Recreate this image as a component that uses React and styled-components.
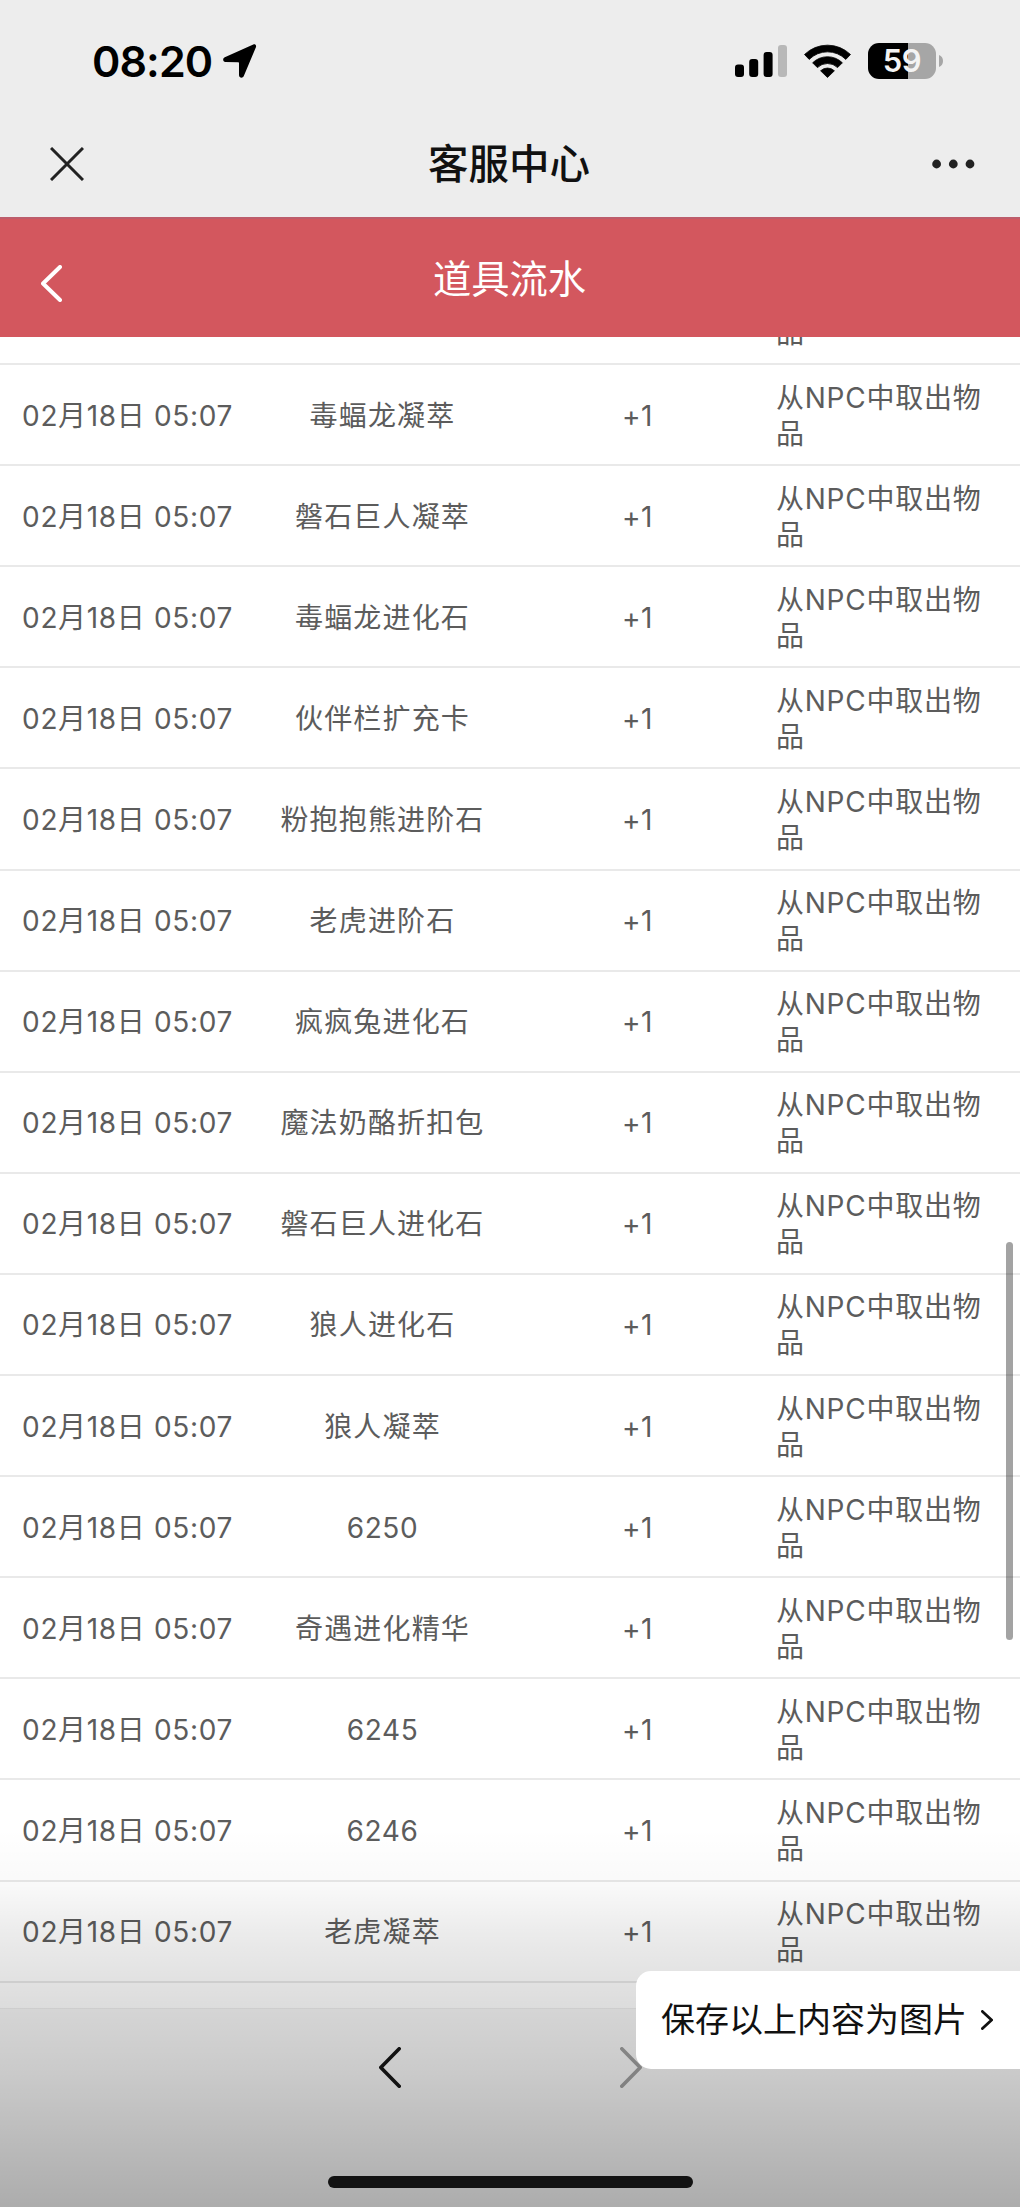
import React from "react";
import styled, { createGlobalStyle } from "styled-components";

const GlobalStyle = createGlobalStyle`
  * { box-sizing: border-box; }
  body {
    margin: 0;
    background: #fff;
    font-family: Inter, "Noto Sans CJK SC", sans-serif;
  }
`;

const Screen = styled.div`
  position: relative;
  display: flex;
  flex-direction: column;
  width: 1020px;
  height: 2207px;
  overflow: hidden;
  background: #fff;
`;

const StatusBar = styled.div`
  display: flex;
  justify-content: space-between;
  align-items: center;
  height: 122px;
  padding: 0 77px 0 92px;
  background: #ededed;
`;

const StatusGroup = styled.div`
  display: flex;
  align-items: center;
`;

const Clock = styled.span`
  width: 131px;
  font-size: 43px;
  font-weight: 600;
  line-height: 50px;
  letter-spacing: -0.9px;
  color: #000;
  white-space: nowrap;
`;

const Glyph = styled.svg`
  display: block;
  flex: none;
  margin-left: ${(p) => p.$left || 0}px;
`;

const Battery = styled.div`
  display: flex;
  align-items: center;
  justify-content: center;
  width: 68px;
  height: 36px;
  margin-left: 17px;
  border-radius: 11px;
  background: linear-gradient(90deg, #000 40px, #a6a6a6 40px);
  color: #f4f4f4;
  font-size: 31px;
  font-weight: 600;
  letter-spacing: -0.3px;
  line-height: 36px;
`;

const NavBar = styled.div`
  display: grid;
  grid-template-columns: 1fr auto 1fr;
  align-items: center;
  height: 95px;
  padding: 0 45px 11px 50px;
  background: #ededed;
`;

const NavTitle = styled.h1`
  margin: 2px 7px 0 0;
  font-size: 40.5px;
  font-weight: 500;
  line-height: 60px;
  color: #111;
`;

const NavEnd = styled.div`
  display: flex;
  justify-content: flex-end;
`;

const PageHeader = styled.div`
  display: grid;
  grid-template-columns: 1fr auto 1fr;
  align-items: center;
  height: 120px;
  padding: 10px 41px 0 41px;
  border-top: 2px solid #bd5d6b;
  background: #d3575e;
`;

const PageTitle = styled.h2`
  margin: 0 1px 9px 0;
  font-size: 38.3px;
  font-weight: 400;
  line-height: 56px;
  color: #fff;
`;

const List = styled.div`
  height: 1671px;
  overflow: hidden;
  background: #fff;
`;

const Rows = styled.div`
  margin-top: -73px;
`;

const Row = styled.div`
  display: grid;
  grid-template-columns: repeat(4, 255px);
  align-items: center;
  height: 101.1px;
  padding-top: 2px;
  border-bottom: 2px solid #e9e9e9;
  color: #5c5c5c;
  font-size: 28px;
  font-weight: 400;
  line-height: 36px;
`;

const Cell = styled.div`
  text-align: center;
  white-space: nowrap;
  letter-spacing: ${(p) => (p.$numeric ? "0.65px" : "1.15px")};
`;

const Reason = styled.div`
  padding: 0 20px 0 11px;
  white-space: nowrap;
`;

const Line = styled.span`
  display: block;
  min-height: 36px;
  letter-spacing: 0.75px;
`;

const BottomBar = styled.div`
  display: flex;
  flex: 1;
  flex-direction: column;
  justify-content: space-between;
  align-items: center;
  padding: 38px 0 19px;
  border-top: 1px solid #eee;
  background: #f7f7f7;
`;

const Pager = styled.div`
  display: flex;
  justify-content: space-between;
  width: 263px;
`;

const HomeIndicator = styled.div`
  width: 365px;
  height: 12px;
  border-radius: 6px;
  background: #1a1a1a;
`;

const Shade = styled.div`
  position: absolute;
  left: 0;
  right: 0;
  bottom: 0;
  height: 379px;
  background: linear-gradient(
    rgba(0, 0, 0, 0) 0%,
    rgba(0, 0, 0, 0.025) 15%,
    rgba(0, 0, 0, 0.08) 28%,
    rgba(0, 0, 0, 0.137) 47.5%,
    rgba(0, 0, 0, 0.18) 64%,
    rgba(0, 0, 0, 0.3) 100%
  );
  pointer-events: none;
`;

const Scrollbar = styled.div`
  position: absolute;
  top: 1242px;
  right: 7px;
  width: 7px;
  height: 398px;
  border-radius: 4px;
  background: rgba(0, 0, 0, 0.36);
`;

const SaveButton = styled.button`
  position: absolute;
  top: 1971px;
  right: 0;
  display: flex;
  justify-content: space-between;
  align-items: center;
  width: 384px;
  height: 98px;
  padding: 0 27px 0 25px;
  border: 0;
  border-radius: 15px 0 0 15px;
  background: #fff;
  color: #111;
  font-family: inherit;
  font-size: 34px;
  font-weight: 400;
  line-height: 50px;
  white-space: nowrap;
`;

const names = [
  "毒蝠龙凝萃",
  "磐石巨人凝萃",
  "毒蝠龙进化石",
  "伙伴栏扩充卡",
  "粉抱抱熊进阶石",
  "老虎进阶石",
  "疯疯兔进化石",
  "魔法奶酪折扣包",
  "磐石巨人进化石",
  "狼人进化石",
  "狼人凝萃",
  "6250",
  "奇遇进化精华",
  "6245",
  "6246",
  "老虎凝萃",
];

function Chevron({ width, height, stroke, color, flip }) {
  const h = stroke / 2;
  const a = flip ? h : width - h;
  const b = flip ? width - h : h;
  return (
    <Glyph width={width} height={height} viewBox={`0 0 ${width} ${height}`} fill="none">
      <path
        d={`M${a} ${h} L${b} ${height / 2} L${a} ${height - h}`}
        stroke={color}
        strokeWidth={stroke}
        strokeLinecap="round"
        strokeLinejoin="round"
      />
    </Glyph>
  );
}

export default function App() {
  return (
    <>
      <GlobalStyle />
      <Screen>
        <StatusBar>
          <StatusGroup>
            <Clock>08:20</Clock>
            <Glyph width="34" height="34" viewBox="0 0 34 34">
              <path
                d="M30.3 .5 L1.8 13.2 C-.7 14.4 -.2 18 2.4 18 L15.3 18.2 Q16 18.2 16 19 L16 31 C16 34 19.7 34.7 20.8 32 L32.8 3.6 C33.7 1.4 32.4 -.4 30.3 .5 Z"
                fill="#000"
              />
            </Glyph>
          </StatusGroup>
          <StatusGroup>
            <Glyph width="53" height="34" viewBox="0 0 53 34">
              <rect x="1" y="20.5" width="9" height="12.5" rx="3" />
              <rect x="15.2" y="15" width="9" height="18" rx="3" />
              <rect x="29.6" y="8" width="9" height="25" rx="3" />
              <rect x="44" y="1" width="9" height="32" rx="3" fill="#b8b8b8" />
            </Glyph>
            <Glyph $left={17} width="47" height="34" viewBox="0 0 47 34">
              <path d="M0.5 10.5 A33 33 0 0 1 46.5 10.5 L41.8 15.4 A26 26 0 0 0 5.2 15.4 Z" stroke="#000" strokeWidth="0.8" strokeLinejoin="round" />
              <path d="M8.6 18.8 A21.3 21.3 0 0 1 38.4 18.8 L33.6 23.6 A14.5 14.5 0 0 0 13.4 23.6 Z" stroke="#000" strokeWidth="0.8" strokeLinejoin="round" />
              <path d="M16.6 26.8 A10 10 0 0 1 30.4 26.8 L23.5 33.5 Z" stroke="#000" strokeWidth="0.8" strokeLinejoin="round" />
            </Glyph>
            <Battery>59</Battery>
            <Glyph $left={3} width="4" height="12" viewBox="0 0 4 12">
              <path d="M0 0 Q4 1.5 4 6 Q4 10.5 0 12 Z" fill="#a6a6a6" />
            </Glyph>
          </StatusGroup>
        </StatusBar>

        <NavBar>
          <Glyph width="34" height="34" viewBox="0 0 34 34" fill="none">
            <path d="M1 1 L33 33 M33 1 L1 33" stroke="#222" strokeWidth="3" />
          </Glyph>
          <NavTitle>客服中心</NavTitle>
          <NavEnd>
            <Glyph width="43" height="10" viewBox="0 0 43 10" fill="#222">
              <circle cx="4.6" cy="5" r="4.4" />
              <circle cx="21.3" cy="5" r="4.4" />
              <circle cx="38" cy="5" r="4.4" />
            </Glyph>
          </NavEnd>
        </NavBar>

        <PageHeader>
          <Chevron width={21} height={37} stroke={4} color="#fff" />
          <PageTitle>道具流水</PageTitle>
        </PageHeader>

        <List>
          <Rows>
            <Row>
              <Cell />
              <Cell />
              <Cell />
              <Reason>
                <Line />
                <Line>品</Line>
              </Reason>
            </Row>
            {names.map((name) => (
              <Row key={name}>
                <Cell $numeric>02月18日 05:07</Cell>
                <Cell $numeric={/^\d+$/.test(name)}>{name}</Cell>
                <Cell $numeric>+1</Cell>
                <Reason>
                  <Line>从NPC中取出物</Line>
                  <Line>品</Line>
                </Reason>
              </Row>
            ))}
          </Rows>
        </List>

        <BottomBar>
          <Pager>
            <Chevron width={22} height={41} stroke={3.6} color="#161616" />
            <Chevron width={22} height={41} stroke={3.6} color="#9f9f9f" flip />
          </Pager>
          <HomeIndicator />
        </BottomBar>

        <Shade />
        <Scrollbar />
        <SaveButton>
          保存以上内容为图片
          <Chevron width={12} height={20} stroke={2.8} color="#111" flip />
        </SaveButton>
      </Screen>
    </>
  );
}
